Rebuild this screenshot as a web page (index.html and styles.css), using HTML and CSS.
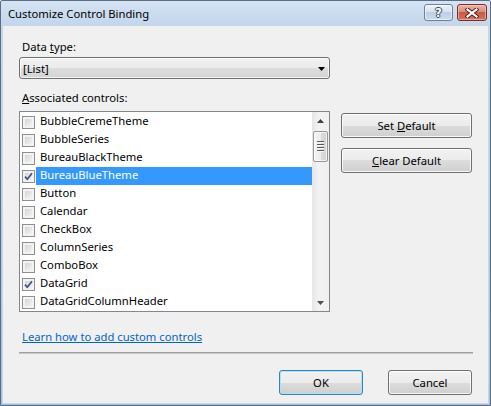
FILE: index.html
```html
<!DOCTYPE html>
<html>
<head>
<meta charset="utf-8">
<link rel="stylesheet" href="styles.css">
</head>
<body>
<div class="window">
  <div class="titlebar">
    <span class="title">Customize Control Binding</span>
    <div class="capbtns">
      <div class="cap help"><span class="q">?</span></div>
      <div class="cap close">
        <svg width="14" height="10" viewBox="0 0 14 10">
          <path d="M2.5 1.5 L11.5 8.5 M11.5 1.5 L2.5 8.5" stroke="#4a1a14" stroke-width="4" stroke-linecap="square" fill="none"/>
          <path d="M2.5 1.5 L11.5 8.5 M11.5 1.5 L2.5 8.5" stroke="#ffffff" stroke-width="2.2" stroke-linecap="square" fill="none"/>
        </svg>
      </div>
    </div>
  </div>
  <div class="client">
    <div class="lbl lbl-type">Data <u>t</u>ype:</div>
    <div class="combo">
      <span class="combo-text">[List]</span>
      <svg class="combo-arrow" width="7" height="4" viewBox="0 0 7 4"><path d="M0 0 H7 L3.5 4 Z" fill="#000"/></svg>
    </div>
    <div class="lbl lbl-assoc"><u>A</u>ssociated controls:</div>
    <div class="middle">
      <div class="listbox">
        <div class="items">
          <div class="row"><span class="cb"></span><span class="txt">BubbleCremeTheme</span></div>
          <div class="row"><span class="cb"></span><span class="txt">BubbleSeries</span></div>
          <div class="row"><span class="cb"></span><span class="txt">BureauBlackTheme</span></div>
          <div class="row sel"><span class="cb checked"><svg width="11" height="11" viewBox="0 0 11 11"><path d="M2 5.6 L4.3 8.2 L9 2.3" stroke="#3e4f80" stroke-width="1.7" fill="none"/></svg></span><span class="txt">BureauBlueTheme</span></div>
          <div class="row"><span class="cb"></span><span class="txt">Button</span></div>
          <div class="row"><span class="cb"></span><span class="txt">Calendar</span></div>
          <div class="row"><span class="cb"></span><span class="txt">CheckBox</span></div>
          <div class="row"><span class="cb"></span><span class="txt">ColumnSeries</span></div>
          <div class="row"><span class="cb"></span><span class="txt">ComboBox</span></div>
          <div class="row"><span class="cb checked"><svg width="11" height="11" viewBox="0 0 11 11"><path d="M2 5.6 L4.3 8.2 L9 2.3" stroke="#3e4f80" stroke-width="1.7" fill="none"/></svg></span><span class="txt">DataGrid</span></div>
          <div class="row"><span class="cb"></span><span class="txt">DataGridColumnHeader</span></div>
        </div>
        <div class="vscroll">
          <div class="sb-btn"><svg width="7" height="4" viewBox="0 0 7 4"><path d="M3.5 0 L7 4 H0 Z" fill="#404040"/></svg></div>
          <div class="sb-track">
            <div class="thumb">
              <span class="grip"></span><span class="grip"></span><span class="grip"></span><span class="grip"></span>
            </div>
          </div>
          <div class="sb-btn"><svg width="7" height="4" viewBox="0 0 7 4"><path d="M0 0 H7 L3.5 4 Z" fill="#505050"/></svg></div>
        </div>
      </div>
      <div class="side-btns">
        <div class="btn side"><span>Set <u>D</u>efault</span></div>
        <div class="btn side"><span><u>C</u>lear Default</span></div>
      </div>
    </div>
    <a class="link">Learn how to add custom controls</a>
    <div class="sep"></div>
    <div class="footer">
      <div class="btn foot ok"><span>OK</span></div>
      <div class="btn foot"><span>Cancel</span></div>
    </div>
  </div>
</div>
</body>
</html>
```
FILE: styles.css
```css
* { box-sizing: border-box; }
html, body { margin: 0; padding: 0; }
body {
  width: 491px;
  height: 406px;
  overflow: hidden;
  background: #ffffff;
  font-family: "Noto Sans", "Open Sans", sans-serif;
  font-size: 11.25px;
  color: #000;
}
u { text-decoration: underline; text-underline-offset: 1px; }

.window {
  width: 491px;
  height: 406px;
  border: 1px solid #5d6d82;
  border-radius: 2px 2px 0 0;
  background: linear-gradient(#d5e3f3 0px, #c3d6ec 24px, #b5cde8 200px, #9dc0e4 100%);
  display: flex;
  flex-direction: column;
}

.titlebar {
  height: 24px;
  flex: none;
  display: flex;
  justify-content: space-between;
  align-items: flex-start;
  padding: 0 3px 0 7px;
}
.title {
  padding-top: 5px;
  line-height: 15px;
}
.capbtns {
  display: flex;
  gap: 4px;
  margin-top: 3px;
}
.cap {
  height: 17px;
  border-radius: 3px;
  display: flex;
  align-items: center;
  justify-content: center;
}
.help {
  width: 29px;
  border: 1px solid #6f8096;
  background: linear-gradient(#eaf1fa 0%, #d5e2f1 45%, #bccfe6 50%, #cbdcef 100%);
  box-shadow: inset 0 0 0 1px rgba(255,255,255,0.55);
}
.q {
  font-family: "DejaVu Sans", sans-serif;
  font-weight: bold;
  font-size: 12px;
  line-height: 12px;
  color: #ffffff;
  text-shadow: 1px 0 0 #3c4b60, -1px 0 0 #3c4b60, 0 1px 0 #3c4b60, 0 -1px 0 #3c4b60;
}
.close {
  width: 30px;
  border: 1px solid #7d2f27;
  background: linear-gradient(#ecb3a6 0%, #dd8b77 45%, #c95a45 50%, #d27360 100%);
  box-shadow: inset 0 0 0 1px rgba(255,220,210,0.5);
}
.close svg { display: block; }

.client {
  flex: 1;
  margin: 0 1px 1px 1px;
  border: 1px solid #c9d7e8;
  background: #f0f0f0;
  padding: 13px 15px 0 16px;
  display: flex;
  flex-direction: column;
}

.lbl {
  line-height: 15px;
  padding-left: 3px;
}
.lbl-assoc { margin-top: 11px; }

.combo {
  margin-top: 3px;
  width: 311px;
  height: 22px;
  border: 1px solid #707070;
  border-radius: 3px;
  background: linear-gradient(#f2f2f2 0%, #ebebeb 50%, #dddddd 50%, #d4d4d4 100%);
  box-shadow: inset 0 0 0 1px rgba(255,255,255,0.75);
  display: flex;
  align-items: center;
  justify-content: space-between;
  padding: 1px 4px 0 3px;
}
.combo-text { line-height: 15px; }
.combo-arrow { display: block; }

.middle {
  margin-top: 6px;
  display: flex;
  gap: 11px;
}
.listbox {
  width: 311px;
  height: 201px;
  border: 1px solid #828790;
  background: #ffffff;
  display: flex;
}
.items {
  width: 292px;
  padding-top: 1px;
  overflow: hidden;
}
.row {
  height: 18px;
  display: flex;
  align-items: flex-start;
  padding-left: 2px;
}
.cb {
  width: 13px;
  height: 13px;
  flex: none;
  margin-top: 3px;
  border: 1px solid #8e8f8f;
  background: linear-gradient(135deg, #cdcdcd 0%, #e9e9e9 60%, #f6f6f6 100%);
  box-shadow: inset 0 0 0 2px #f3f3f3;
}
.cb svg { display: block; }
.txt {
  flex: 1;
  height: 18px;
  margin-left: 1px;
  padding-left: 4px;
  line-height: 15px;
  white-space: nowrap;
}
.row.sel .txt {
  background: #3399ff;
  color: #ffffff;
}

.vscroll {
  width: 17px;
  display: flex;
  flex-direction: column;
  background: linear-gradient(to right, #e6e6e6, #f2f2f2 40%, #f0f0f0);
}
.sb-btn {
  height: 17px;
  flex: none;
  display: flex;
  align-items: center;
  justify-content: center;
}
.sb-btn svg { display: block; }
.sb-track {
  flex: 1;
  padding: 2px 1px 0 1px;
}
.thumb {
  height: 31px;
  border: 1px solid #979797;
  border-radius: 2px;
  background: linear-gradient(to right, #f4f4f4 0%, #ececec 50%, #dcdcdc 55%, #d2d2d2 100%);
  box-shadow: inset 0 0 0 1px rgba(255,255,255,0.7);
  display: flex;
  flex-direction: column;
  align-items: center;
  justify-content: center;
  gap: 1px;
}
.grip {
  width: 7px;
  height: 1px;
  background: #5a5a5a;
  box-shadow: 0 1px 0 #f6f6f6;
  margin-bottom: 1px;
}

.side-btns {
  display: flex;
  flex-direction: column;
  gap: 10px;
  padding-top: 2px;
}
.btn {
  height: 25px;
  border: 1px solid #707070;
  border-radius: 3px;
  background: linear-gradient(#f2f2f2 0%, #ebebeb 50%, #dddddd 50%, #cfcfcf 100%);
  box-shadow: inset 0 0 0 1px rgba(255,255,255,0.8);
  display: flex;
  align-items: center;
  justify-content: center;
  line-height: 15px;
}
.side { width: 131px; }

.link {
  margin-top: 17px;
  padding-left: 3px;
  line-height: 15px;
  color: #0066cc;
  text-decoration: underline;
  text-underline-offset: 1px;
  align-self: flex-start;
}
.sep {
  margin-top: 8px;
  height: 2px;
  background: linear-gradient(#a0a0a0 50%, #c8c8c8 50%);
}
.footer {
  margin-top: 16px;
  display: flex;
  justify-content: flex-end;
  gap: 25px;
  padding-right: 1px;
}
.foot { width: 84px; }
.ok {
  border-color: #3c7fb1;
  box-shadow: inset 0 0 0 1px #a9e4f9;
}
```
